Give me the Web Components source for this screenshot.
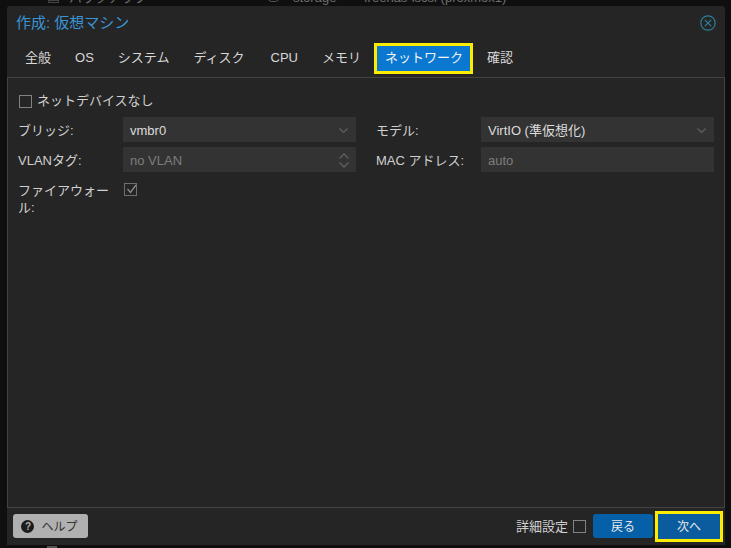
<!DOCTYPE html>
<html lang="ja"><head><meta charset="utf-8"><title>作成: 仮想マシン</title>
<style>
html,body{margin:0;padding:0;height:100%;background:#0f0f0f;overflow:hidden}
body{font:13px/17px "Liberation Sans","Noto Sans CJK JP",sans-serif;color:#d0d0d0;position:relative}
</style></head><body>
<pve-backdrop></pve-backdrop>
<pve-window heading="作成: 仮想マシン">
  <pve-tabs slot="tabs"></pve-tabs>
  <pve-check label="ネットデバイスなし" style="margin-bottom:7px"></pve-check>
  <pve-form-grid>
    <pve-field label="ブリッジ:" value="vmbr0" icon="down"></pve-field>
    <pve-field label="モデル:" value="VirtIO (準仮想化)" icon="down"></pve-field>
    <pve-field label="VLANタグ:" value="no VLAN" icon="spin" empty></pve-field>
    <pve-field label="MAC アドレス:" value="auto" empty></pve-field>
    <pve-field label="ファイアウォール:" check></pve-field>
  </pve-form-grid>
  <pve-footer slot="footer"></pve-footer>
</pve-window>
<script>
function def(name, css, html, init){
  customElements.define(name, class extends HTMLElement{
    connectedCallback(){
      if(this.shadowRoot) return;
      const r=this.attachShadow({mode:'open'});
      r.innerHTML='<style>'+css+'</style>'+(typeof html==='function'?html(this):html);
      if(init) init(this,r);
    }
  });
}
def('pve-backdrop',
 `:host{position:absolute;left:0;top:0;width:100%;height:100%;color:#6e6e6e;font-size:13px;line-height:17px;display:block;white-space:nowrap;overflow:hidden}
  span{position:absolute;top:-11px}
  i{position:absolute;left:47px;top:546px;width:10px;height:2px;background:#555}`,
 `<span style="left:47px">▤</span><span style="left:69px">バックアップ</span><span style="left:268px">⛁</span><span style="left:293px">storage</span><span style="left:364px">freenas-iscsi (proxmox1)</span><i></i>`);
def('pve-window',
 `:host{position:absolute;left:7px;top:6px;width:718px;height:539px;background:#252525;display:flex;flex-direction:column;box-sizing:border-box;border-radius:3px 3px 0 0}
  header{height:35px;flex:none;display:flex;align-items:center;justify-content:space-between;padding:0 9px 1px 9px;box-sizing:border-box}
  h1{margin:0;font:400 15px/20px "Liberation Sans","Noto Sans CJK JP",sans-serif;color:#3a94d4}
  svg{display:block}
  .tabs{height:36px;flex:none;display:flex}
  main{flex:1;border:1px solid #434343;border-width:1px 1px 0 1px;padding:15px 10px 0 11px;min-height:0;margin:0;box-sizing:border-box}
  .foot{height:38px;flex:none;border-top:1px solid #434343;box-sizing:border-box}`,
 h=>`<header><h1>${h.getAttribute('heading')}</h1>
   <svg width="16" height="16" viewBox="0 0 16 16" fill="none" stroke="#2b8299" stroke-width="1.2"><circle cx="8" cy="8" r="7.2"/><path d="M4.8 4.8l6.4 6.4M11.2 4.8l-6.4 6.4"/></svg></header>
   <div class="tabs"><slot name="tabs"></slot></div>
   <main><slot></slot></main>
   <div class="foot"><slot name="footer"></slot></div>`);
def('pve-tabs',
 `:host{display:flex;padding-left:6px;height:36px;align-items:flex-start}
  span{display:block;padding:8px 12px 0;height:26px;color:#d8d8d8;white-space:nowrap;box-sizing:border-box}
  .wide{margin-right:2px}
  .on{background:#0a78d0;color:#f4f4f4;outline:3px solid #fdec00;height:25px;margin:5px 5px 0 4px;padding:3px 7px 0 8px}`,
 `<span>全般</span><span>OS</span><span>システム</span><span class="wide">ディスク</span><span>CPU</span><span>メモリ</span><span class="on">ネットワーク</span><span>確認</span>`);
const box=`.box{width:11px;height:11px;border:1px solid #828282;box-sizing:content-box;flex:none;display:block}`;
def('pve-check',
 `:host{display:flex;align-items:center;gap:5px;height:17px}${box}
  .t{margin-bottom:2px}`,
 h=>`<span class="box"></span><span class="t">${h.getAttribute('label')}</span>`);
def('pve-form-grid',
 `:host{display:grid;grid-template-columns:338px 338px;column-gap:20px;row-gap:5px;margin-left:-1px;align-items:start}`,
 `<slot></slot>`);
def('pve-field',
 `:host{display:flex;align-items:flex-start;min-height:25px}
  label{width:105px;flex:none;box-sizing:border-box;line-height:17px;padding:5px 5px 0 0}
  .input{flex:1;height:25px;background:#333;display:flex;align-items:center;justify-content:space-between;padding:1px 6px 0 7px;box-sizing:border-box;color:#dcdcdc}
  .empty{color:#7d7d7d}
  svg{display:block;flex:none}
  .d{margin-right:2px}
  .c{width:13px;height:13px;border:1px solid #707070;box-sizing:border-box;margin:6px 0 0 1px;position:relative}
  .c svg{position:absolute;left:1px;top:-1px}`,
 h=>{
  const lab=`<label>${h.getAttribute('label')}</label>`;
  if(h.hasAttribute('check')) return lab+`<span class="c"><svg width="12" height="12" viewBox="0 0 12 12" fill="none" stroke="#8c8c8c" stroke-width="1.3"><path d="M1.5 6l3 3.5L10 2"/></svg></span>`;
  const ic=h.getAttribute('icon');
  const svg=ic==='down'?`<svg class="d" width="9" height="5" viewBox="0 0 9 5" fill="none" stroke="#5f5f5f" stroke-width="1.2"><path d="M.5.5l4 4 4-4"/></svg>`
    :ic==='spin'?`<svg width="12" height="17" viewBox="0 0 12 17" fill="none" stroke="#5f5f5f" stroke-width="1.3"><path d="M1.5 6.5L6 2l4.5 4.5M1.5 10.5L6 15l4.5-4.5"/></svg>`:'';
  return lab+`<div class="input ${h.hasAttribute('empty')?'empty':''}"><span>${h.getAttribute('value')}</span>${svg}</div>`;
 });
def('pve-footer',
 `:host{display:flex;align-items:flex-start;height:37px;padding:6px 5px 0 6px;box-sizing:border-box}
  button{font:12px/16px "Liberation Sans","Noto Sans CJK JP",sans-serif;height:24px;border:0;border-radius:3px;padding:1px 0 0;margin:0;display:flex;align-items:center;justify-content:center;box-sizing:border-box}
  .help{width:75px;background:#b0b0b0;color:#333;gap:7px;padding-right:2px}
  .q{width:13px;height:13px;border-radius:50%;background:#1c1c1c;color:#b0b0b0;font:700 10px/13px "Liberation Sans",sans-serif;text-align:center;display:block}
  .sp{flex:1}
  .adv{display:flex;align-items:center;gap:5px;margin:4px 7px 0 0}
  ${box}
  .blue{background:#0560a8;color:#e8e8e8;width:60px}
  .next{width:62px;height:25px;margin-left:5px;background:#0a5c9e;outline:3px solid #fdec00;border-radius:0}`,
 `<button class="help"><span class="q">?</span><span>ヘルプ</span></button><span class="sp"></span>
  <span class="adv"><span>詳細設定</span><span class="box"></span></span>
  <button class="blue">戻る</button><button class="blue next">次へ</button>`);
</script>
</body></html>
